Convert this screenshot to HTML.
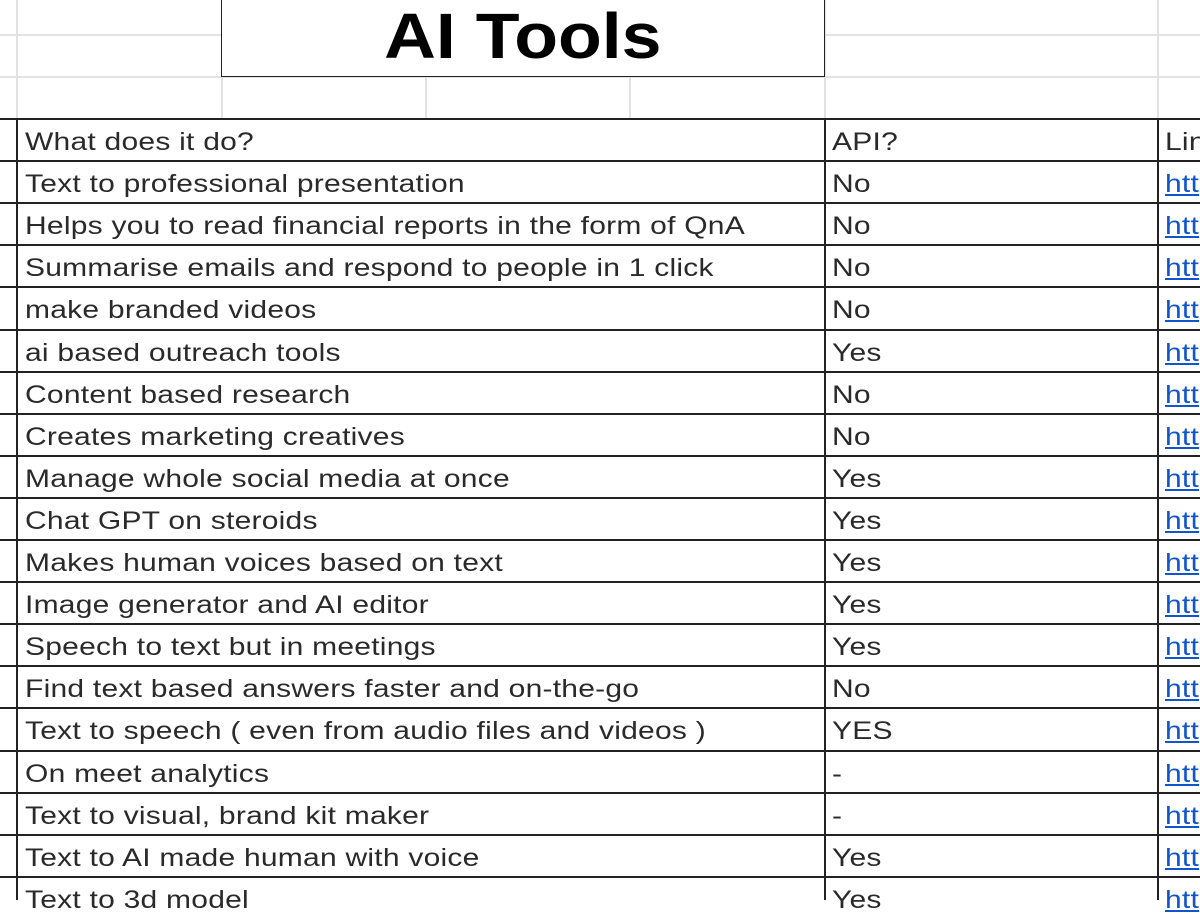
<!DOCTYPE html>
<html><head><style>
body{margin:0;width:1200px;height:900px;overflow:hidden;background:#fff;position:relative;font-family:"Liberation Sans",sans-serif;color:#2a2a2a}
.l{position:absolute;background:#e2e2e2}
.b{position:absolute;background:#222}
.t{position:absolute;font-size:25px;letter-spacing:0.2px;white-space:nowrap;line-height:42px;transform:scaleX(1.2);transform-origin:0 0}
a{color:#1155cc;text-decoration:underline}
</style></head><body>
<div class="l" style="left:0;top:34px;width:1200px;height:2px"></div>
<div class="l" style="left:0;top:76px;width:1200px;height:2px"></div>
<div class="l" style="left:16px;top:0;width:2px;height:118px"></div>
<div class="l" style="left:221px;top:76px;width:2px;height:42px"></div>
<div class="l" style="left:425px;top:76px;width:2px;height:42px"></div>
<div class="l" style="left:629px;top:76px;width:2px;height:42px"></div>
<div class="l" style="left:824px;top:0;width:2px;height:118px"></div>
<div class="l" style="left:1157px;top:0;width:2px;height:118px"></div>
<div style="position:absolute;left:221px;top:-2px;width:602px;height:77px;border:1.5px solid #222;background:#fff;text-align:center;font-weight:bold;font-size:64px;line-height:74px;color:#000"><span style="display:inline-block;transform:scaleX(1.12)">AI Tools</span></div>
<div class="b" style="left:16px;top:118px;width:2px;height:782px"></div>
<div class="b" style="left:824px;top:118px;width:2px;height:782px"></div>
<div class="b" style="left:1157px;top:118px;width:2px;height:782px"></div>
<div id="rows"></div>
<script>
var d=[["What does it do?","API?","Lin"],["Text to professional presentation","No"],["Helps you to read financial reports in the form of QnA","No"],["Summarise emails and respond to people in 1 click","No"],["make branded videos","No"],["ai based outreach tools","Yes"],["Content based research","No"],["Creates marketing creatives","No"],["Manage whole social media at once","Yes"],["Chat GPT on steroids","Yes"],["Makes human voices based on text","Yes"],["Image generator and AI editor","Yes"],["Speech to text but in meetings","Yes"],["Find text based answers faster and on-the-go","No"],["Text to speech ( even from audio files and videos )","YES"],["On meet analytics","-"],["Text to visual, brand kit maker","-"],["Text to AI made human with voice","Yes"],["Text to 3d model","Yes"]];
var h="";
for(var i=0;i<d.length;i++){var y=119+i*42.1;
h+='<div class="b" style="left:0;top:'+Math.round(y-1)+'px;width:1200px;height:2px"></div>';
h+='<div class="t" style="left:25px;top:'+Math.round(y+2)+'px">'+d[i][0]+'</div>';
h+='<div class="t" style="left:832px;top:'+Math.round(y+2)+'px">'+d[i][1]+'</div>';
h+='<div class="t" style="left:1165px;top:'+Math.round(y+2)+'px">'+(i==0?'Lin':'<a>htt</a>')+'</div>';}
document.getElementById("rows").innerHTML=h;
</script>
</body></html>
